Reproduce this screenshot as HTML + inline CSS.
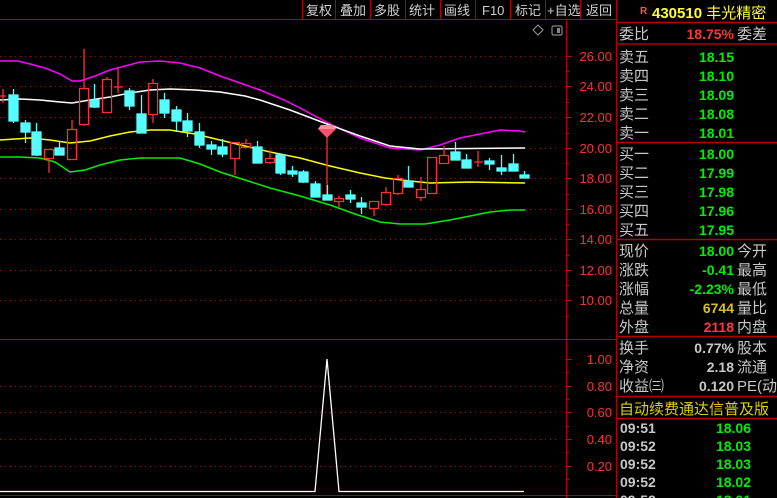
<!DOCTYPE html>
<html><head><meta charset="utf-8"><style>
html,body{margin:0;padding:0;background:#000;width:777px;height:498px;overflow:hidden}
svg{display:block}
.c{font-family:"Liberation Sans","Noto Sans CJK SC",sans-serif}
</style></head><body>
<svg width="777" height="498" viewBox="0 0 777 498" xmlns="http://www.w3.org/2000/svg" class="c">
<rect width="777" height="498" fill="#000"/>
<!-- toolbar -->
<g stroke="#b00000" stroke-width="1" fill="none">
<line x1="0" y1="19.5" x2="617" y2="19.5"/>
<line x1="302.5" y1="0" x2="302.5" y2="19"/><line x1="335.5" y1="0" x2="335.5" y2="19"/>
<line x1="370.5" y1="0" x2="370.5" y2="19"/><line x1="405.5" y1="0" x2="405.5" y2="19"/>
<line x1="440.5" y1="0" x2="440.5" y2="19"/><line x1="475.5" y1="0" x2="475.5" y2="19"/>
<line x1="510.5" y1="0" x2="510.5" y2="19"/><line x1="545.5" y1="0" x2="545.5" y2="19"/>
<line x1="580.5" y1="0" x2="580.5" y2="19"/>
<line x1="566.5" y1="20" x2="566.5" y2="498"/>
<line x1="616.5" y1="0" x2="616.5" y2="498"/>
<line x1="0" y1="339.5" x2="617" y2="339.5"/>
<line x1="0" y1="495.5" x2="617" y2="495.5"/>
</g>
<g fill="#d0d0d0" font-size="13">
<text x="306" y="15">复权</text><text x="340" y="15">叠加</text><text x="374" y="15">多股</text>
<text x="409" y="15">统计</text><text x="444" y="15">画线</text><text x="482" y="15">F10</text>
<text x="515" y="15">标记</text><text x="547" y="15">+自选</text><text x="586" y="15">返回</text>
</g>
<path d="M538 25 L543 30 L538 35 L533 30 Z" fill="none" stroke="#999"/>
<rect x="552" y="26" width="10" height="9" rx="1.5" fill="none" stroke="#888" stroke-width="1.2"/>
<rect x="557" y="28" width="3" height="5" fill="#888"/>
<!-- grid dotted -->
<g stroke="#c00000" stroke-dasharray="1 4" stroke-width="1">
<line x1="0" y1="56.5" x2="560" y2="56.5"/><line x1="0" y1="86.5" x2="560" y2="86.5"/>
<line x1="0" y1="117.5" x2="560" y2="117.5"/><line x1="0" y1="148.5" x2="560" y2="148.5"/>
<line x1="0" y1="178.5" x2="560" y2="178.5"/><line x1="0" y1="209.5" x2="560" y2="209.5"/>
<line x1="0" y1="239.5" x2="560" y2="239.5"/><line x1="0" y1="270.5" x2="560" y2="270.5"/>
<line x1="0" y1="300.5" x2="560" y2="300.5"/>
<line x1="0" y1="386.5" x2="560" y2="386.5"/><line x1="0" y1="412.5" x2="560" y2="412.5"/>
<line x1="0" y1="439.5" x2="560" y2="439.5"/><line x1="0" y1="466.5" x2="560" y2="466.5"/>
</g>
<!-- axis ticks -->
<g stroke="#c00000">
<path d="M566 56.5h6M566 71.5h3M566 86.5h6M566 102.5h3M566 117.5h6M566 133.5h3M566 148.5h6M566 163.5h3M566 178.5h6M566 194.5h3M566 209.5h6M566 224.5h3M566 239.5h6M566 255.5h3M566 270.5h6M566 285.5h3M566 300.5h6M566 316.5h3M566 359.5h6M566 372.5h3M566 386.5h6M566 399.5h3M566 412.5h6M566 426.5h3M566 439.5h6M566 452.5h3M566 466.5h6M566 479.5h3"/>
</g>
<g fill="#ff3030" font-size="13" text-anchor="end">
<text x="612" y="61">26.00</text><text x="612" y="91">24.00</text><text x="612" y="122">22.00</text>
<text x="612" y="153">20.00</text><text x="612" y="183">18.00</text><text x="612" y="214">16.00</text>
<text x="612" y="244">14.00</text><text x="612" y="275">12.00</text><text x="612" y="305">10.00</text>
<text x="612" y="364">1.00</text><text x="612" y="391">0.80</text><text x="612" y="417">0.60</text>
<text x="612" y="444">0.40</text><text x="612" y="471">0.20</text>
</g>
<!-- bands -->
<g fill="none" stroke-width="1.5">
<polyline stroke="#ff00ff" points="0,61 18,61 30,64 45,68 60,74 72,81 80,81 95,76 110,70 125,66 140,62 160,61 180,63 200,68 220,76 240,83 260,90 284,100 300,108 330,124 360,138 390,148 420,150 440,145 460,138 480,134 500,130 520,131 525,132"/>
<polyline stroke="#ffffff" points="0,100 20,99 40,100 60,102 72,103 90,100 110,97 130,93 150,90 170,89 195,90 220,92 245,96 260,100 290,110 327,124 360,136 390,146 420,149 525,148"/>
<polyline stroke="#ffff00" points="0,140 30,138 50,140 70,143 90,141 110,136 130,132 150,130 170,130 195,134 220,140 245,146 270,152 300,158 330,166 360,173 385,178 410,181 430,183 470,182 525,183"/>
<polyline stroke="#00ee00" points="0,157 20,157 40,158 55,162 70,172 85,170 100,165 120,160 140,158 160,158 180,158 200,164 220,172 245,180 270,188 300,196 330,205 355,214 380,222 400,224 425,224 450,220 470,216 490,212 510,210 525,210"/>
</g>
<!-- candles -->
<g stroke="#ff3030" fill="none" stroke-width="1.3">
<path d="M3 89V103M0 96H6"/>
<rect x="44.5" y="149.5" width="9" height="9"/><path d="M49 158V173"/>
<rect x="67.5" y="129.5" width="9" height="30"/><path d="M72 120V129"/>
<rect x="79.5" y="88.5" width="9" height="36"/><path d="M84 49V88M84 124V126"/>
<rect x="102.5" y="79.5" width="9" height="33"/><path d="M107 77V79"/>
<path d="M118 67V93M114 87H123"/>
<rect x="148.5" y="83.5" width="9" height="31"/><path d="M153 79V83M153 114V123"/>
<rect x="230.5" y="142.5" width="9" height="16"/><path d="M235 158V175"/>
<rect x="241.5" y="143.5" width="9" height="4"/><path d="M246 139V143"/>
<rect x="265.5" y="158.5" width="9" height="4"/><path d="M270 150V158M270 162V164"/>
<path d="M327 126V198"/>
<rect x="334.5" y="198.5" width="9" height="3"/><path d="M339 196V198M339 201V207"/>
<rect x="369.5" y="201.5" width="9" height="7"/><path d="M374 208V216"/>
<rect x="381.5" y="192.5" width="9" height="12"/><path d="M386 187V192M386 204V206"/>
<rect x="393.5" y="178.5" width="9" height="15"/><path d="M398 175V178M398 193V195"/>
<rect x="416.5" y="189.5" width="9" height="8"/><path d="M421 177V189M421 197V201"/>
<rect x="427.5" y="157.5" width="9" height="36"/>
<rect x="439.5" y="155.5" width="9" height="8"/><path d="M444 146V155"/>
<path d="M478 151V167M474 162H483"/>
</g>
<g fill="#55ffff" stroke="#55ffff" stroke-width="1.3">
<rect x="9" y="95" width="9" height="26"/><path d="M13.5 89V123" fill="none"/>
<rect x="21" y="123" width="9" height="9"/><path d="M25.5 120V143" fill="none"/>
<rect x="32" y="132" width="9" height="23"/><path d="M36.5 123V156" fill="none"/>
<rect x="55" y="148" width="9" height="7"/><path d="M59.5 141V148" fill="none"/>
<rect x="90" y="100" width="9" height="7"/><path d="M94.5 84V108" fill="none"/>
<rect x="125" y="91" width="9" height="15"/><path d="M129.5 88V110" fill="none"/>
<rect x="137" y="114" width="9" height="19"/><path d="M141.5 95V133" fill="none"/>
<rect x="160" y="100" width="9" height="13"/><path d="M164.5 93V118" fill="none"/>
<rect x="172" y="110" width="9" height="11"/><path d="M176.5 106V132" fill="none"/>
<rect x="183" y="121" width="9" height="10"/><path d="M187.5 113V137" fill="none"/>
<rect x="195" y="132" width="9" height="13"/><path d="M199.5 123V148" fill="none"/>
<rect x="207" y="145" width="9" height="4"/><path d="M211.5 141V155" fill="none"/>
<rect x="218" y="147" width="9" height="7"/><path d="M222.5 139V157" fill="none"/>
<rect x="253" y="147" width="9" height="16"/><path d="M257.5 141V163" fill="none"/>
<rect x="276" y="155" width="9" height="18"/><path d="M280.5 155V175" fill="none"/>
<rect x="288" y="171" width="9" height="3"/><path d="M292.5 166V177" fill="none"/>
<rect x="299" y="172" width="9" height="10"/><path d="M303.5 170V183" fill="none"/>
<rect x="311" y="184" width="9" height="13"/><path d="M315.5 181V197" fill="none"/>
<rect x="323" y="195" width="9" height="5"/><path d="M327.5 185V195" fill="none"/>
<rect x="346" y="195" width="9" height="4"/><path d="M350.5 190V203" fill="none"/>
<rect x="357" y="203" width="9" height="4"/><path d="M361.5 197V214" fill="none"/>
<rect x="404" y="181" width="9" height="6"/><path d="M408.5 166V187" fill="none"/>
<rect x="451" y="152" width="9" height="8"/><path d="M455.5 142V160" fill="none"/>
<rect x="462" y="160" width="9" height="8"/><path d="M466.5 154V168" fill="none"/>
<rect x="485" y="161" width="9" height="3"/><path d="M489.5 158V170" fill="none"/>
<rect x="497" y="168" width="9" height="3"/><path d="M501.5 155V175" fill="none"/>
<rect x="509" y="164" width="9" height="7"/><path d="M513.5 154V171" fill="none"/>
<rect x="520" y="175" width="9" height="3"/><path d="M524.5 171V175" fill="none"/>
</g>
<!-- diamond -->
<path d="M321 125 H333 L336 129 L327 138 L318 129 Z" fill="#ff5070"/>
<path d="M321 125 H333 L336 129 H318 Z" fill="#ff8a9a"/>
<!-- lower indicator -->
<polyline fill="none" stroke="#fff" stroke-width="1.3" points="0,491.5 315,491.5 327,359 339,491.5 524,491.5"/>
<!-- right panel -->
<g stroke="#b00000" stroke-width="1.5">
<line x1="617" y1="22.5" x2="777" y2="22.5"/><line x1="617" y1="44" x2="777" y2="44"/>
<line x1="617" y1="142.5" x2="777" y2="142.5"/><line x1="617" y1="239.5" x2="777" y2="239.5"/>
<line x1="617" y1="336.5" x2="777" y2="336.5"/><line x1="617" y1="396.5" x2="777" y2="396.5"/>
<line x1="617" y1="418.5" x2="777" y2="418.5"/>
</g>
<text x="640" y="14" fill="#ff5050" font-size="10" font-weight="bold">R</text>
<text x="652" y="18" fill="#ffff33" font-size="15" font-weight="bold">430510 <tspan font-weight="normal">丰光精密</tspan></text>
<g font-size="15" fill="#c8c8c8">
<text x="619" y="39">委比</text><text x="737" y="39">委差</text>
<text x="619" y="62">卖五</text><text x="619" y="81">卖四</text><text x="619" y="100">卖三</text><text x="619" y="119">卖二</text><text x="619" y="138">卖一</text>
<text x="619" y="159">买一</text><text x="619" y="178">买二</text><text x="619" y="197">买三</text><text x="619" y="216">买四</text><text x="619" y="235">买五</text>
<text x="619" y="256">现价</text><text x="737" y="256">今开</text>
<text x="619" y="275">涨跌</text><text x="737" y="275">最高</text>
<text x="619" y="294">涨幅</text><text x="737" y="294">最低</text>
<text x="619" y="313">总量</text><text x="737" y="313">量比</text>
<text x="619" y="332">外盘</text><text x="737" y="332">内盘</text>
<text x="619" y="353">换手</text><text x="737" y="353">股本</text>
<text x="619" y="372">净资</text><text x="737" y="372">流通</text>
<text x="619" y="391">收益㈢</text><text x="737" y="391">PE(动)</text>
</g>
<text x="619" y="414" font-size="15" fill="#e0d000">自动续费通达信普及版</text>
<g font-size="14" font-weight="bold" text-anchor="end">
<text x="734" y="39" fill="#ff3838">18.75%</text>
<g fill="#00ee00">
<text x="734" y="62">18.15</text><text x="734" y="81">18.10</text><text x="734" y="100">18.09</text><text x="734" y="119">18.08</text><text x="734" y="138">18.01</text>
<text x="734" y="159">18.00</text><text x="734" y="178">17.99</text><text x="734" y="197">17.98</text><text x="734" y="216">17.96</text><text x="734" y="235">17.95</text>
<text x="734" y="256">18.00</text><text x="734" y="275">-0.41</text><text x="734" y="294">-2.23%</text>
</g>
<text x="734" y="313" fill="#d8c020">6744</text>
<text x="734" y="332" fill="#ff3838">2118</text>
<g fill="#c8c8c8"><text x="734" y="353">0.77%</text><text x="734" y="372">2.18</text><text x="734" y="391">0.120</text></g>
<g fill="#00ee00">
<text x="751" y="433">18.06</text><text x="751" y="451">18.03</text><text x="751" y="469">18.03</text><text x="751" y="487">18.02</text><text x="751" y="505">18.01</text>
</g>
</g>
<g font-size="14" font-weight="bold" fill="#c8c8c8">
<text x="620" y="433">09:51</text><text x="620" y="451">09:52</text><text x="620" y="469">09:52</text><text x="620" y="487">09:52</text><text x="620" y="505">09:52</text>
</g>
</svg>
</body></html>
